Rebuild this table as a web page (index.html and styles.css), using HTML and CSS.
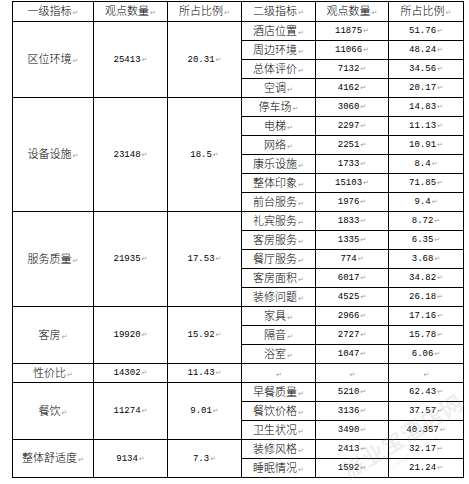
FILE: index.html
```html
<!DOCTYPE html>
<html lang="zh">
<head>
<meta charset="utf-8">
<link rel="stylesheet" href="styles.css">
</head>
<body>
<div class="wrap">
<table class="t">
<colgroup><col class="c1"><col class="c2"><col class="c3"><col class="c4"><col class="c5"><col class="c6"></colgroup>
<tr class="hd"><td>一级指标<span class="pm">↵</span></td><td>观点数量<span class="pm">↵</span></td><td>所占比例<span class="pm">↵</span></td><td>二级指标<span class="pm">↵</span></td><td>观点数量<span class="pm">↵</span></td><td>所占比例<span class="pm">↵</span></td></tr>

<tr><td rowspan="4">区位环境<span class="pm">↵</span></td><td rowspan="4" class="n">25413<span class="pm">↵</span></td><td rowspan="4" class="n">20.31<span class="pm">↵</span></td><td>酒店位置<span class="pm">↵</span></td><td class="n">11875<span class="pm">↵</span></td><td class="n">51.76<span class="pm">↵</span></td></tr>
<tr><td>周边环境<span class="pm">↵</span></td><td class="n">11066<span class="pm">↵</span></td><td class="n">48.24<span class="pm">↵</span></td></tr>
<tr><td>总体评价<span class="pm">↵</span></td><td class="n">7132<span class="pm">↵</span></td><td class="n">34.56<span class="pm">↵</span></td></tr>
<tr><td>空调<span class="pm">↵</span></td><td class="n">4162<span class="pm">↵</span></td><td class="n">20.17<span class="pm">↵</span></td></tr>

<tr><td rowspan="6">设备设施<span class="pm">↵</span></td><td rowspan="6" class="n">23148<span class="pm">↵</span></td><td rowspan="6" class="n">18.5<span class="pm">↵</span></td><td>停车场<span class="pm">↵</span></td><td class="n">3060<span class="pm">↵</span></td><td class="n">14.83<span class="pm">↵</span></td></tr>
<tr><td>电梯<span class="pm">↵</span></td><td class="n">2297<span class="pm">↵</span></td><td class="n">11.13<span class="pm">↵</span></td></tr>
<tr><td>网络<span class="pm">↵</span></td><td class="n">2251<span class="pm">↵</span></td><td class="n">10.91<span class="pm">↵</span></td></tr>
<tr><td>康乐设施<span class="pm">↵</span></td><td class="n">1733<span class="pm">↵</span></td><td class="n">8.4<span class="pm">↵</span></td></tr>
<tr><td>整体印象<span class="pm">↵</span></td><td class="n">15103<span class="pm">↵</span></td><td class="n">71.85<span class="pm">↵</span></td></tr>
<tr><td>前台服务<span class="pm">↵</span></td><td class="n">1976<span class="pm">↵</span></td><td class="n">9.4<span class="pm">↵</span></td></tr>

<tr><td rowspan="5">服务质量<span class="pm">↵</span></td><td rowspan="5" class="n">21935<span class="pm">↵</span></td><td rowspan="5" class="n">17.53<span class="pm">↵</span></td><td>礼宾服务<span class="pm">↵</span></td><td class="n">1833<span class="pm">↵</span></td><td class="n">8.72<span class="pm">↵</span></td></tr>
<tr><td>客房服务<span class="pm">↵</span></td><td class="n">1335<span class="pm">↵</span></td><td class="n">6.35<span class="pm">↵</span></td></tr>
<tr><td>餐厅服务<span class="pm">↵</span></td><td class="n">774<span class="pm">↵</span></td><td class="n">3.68<span class="pm">↵</span></td></tr>
<tr><td>客房面积<span class="pm">↵</span></td><td class="n">6017<span class="pm">↵</span></td><td class="n">34.82<span class="pm">↵</span></td></tr>
<tr><td>装修问题<span class="pm">↵</span></td><td class="n">4525<span class="pm">↵</span></td><td class="n">26.18<span class="pm">↵</span></td></tr>

<tr><td rowspan="3">客房<span class="pm">↵</span></td><td rowspan="3" class="n">19920<span class="pm">↵</span></td><td rowspan="3" class="n">15.92<span class="pm">↵</span></td><td>家具<span class="pm">↵</span></td><td class="n">2966<span class="pm">↵</span></td><td class="n">17.16<span class="pm">↵</span></td></tr>
<tr><td>隔音<span class="pm">↵</span></td><td class="n">2727<span class="pm">↵</span></td><td class="n">15.78<span class="pm">↵</span></td></tr>
<tr><td>浴室<span class="pm">↵</span></td><td class="n">1047<span class="pm">↵</span></td><td class="n">6.06<span class="pm">↵</span></td></tr>

<tr><td>性价比<span class="pm">↵</span></td><td class="n">14302<span class="pm">↵</span></td><td class="n">11.43<span class="pm">↵</span></td><td><span class="pm">↵</span></td><td><span class="pm">↵</span></td><td><span class="pm">↵</span></td></tr>

<tr><td rowspan="3">餐饮<span class="pm">↵</span></td><td rowspan="3" class="n">11274<span class="pm">↵</span></td><td rowspan="3" class="n">9.01<span class="pm">↵</span></td><td>早餐质量<span class="pm">↵</span></td><td class="n">5210<span class="pm">↵</span></td><td class="n">62.43<span class="pm">↵</span></td></tr>
<tr><td>餐饮价格<span class="pm">↵</span></td><td class="n">3136<span class="pm">↵</span></td><td class="n">37.57<span class="pm">↵</span></td></tr>
<tr><td>卫生状况<span class="pm">↵</span></td><td class="n">3490<span class="pm">↵</span></td><td class="n">40.357<span class="pm">↵</span></td></tr>

<tr><td rowspan="2">整体舒适度<span class="pm">↵</span></td><td rowspan="2" class="n">9134<span class="pm">↵</span></td><td rowspan="2" class="n">7.3<span class="pm">↵</span></td><td>装修风格<span class="pm">↵</span></td><td class="n">2413<span class="pm">↵</span></td><td class="n">32.17<span class="pm">↵</span></td></tr>
<tr><td>睡眠情况<span class="pm">↵</span></td><td class="n">1592<span class="pm">↵</span></td><td class="n">21.24<span class="pm">↵</span></td></tr>
</table>
<div class="wm"><span class="wm-big">旅业宝酒店网</span><span class="wm-small">www.sbyy.com</span></div>
</div>
</body>
</html>
```

FILE: styles.css
```css
html, body {
  margin: 0;
  padding: 0;
  background: #fff;
}
body {
  font-family: "Noto Sans CJK SC", "Noto Sans", sans-serif;
  color: #000;
}
.wrap {
  position: relative;
  padding: 1px 0 0 12px;
  width: 469px;
  height: 484px;
  box-sizing: border-box;
  overflow: hidden;
}
.t {
  border-collapse: collapse;
  table-layout: fixed;
  width: 452px;
}
.c1 { width: 81px; }
.c2 { width: 74px; }
.c3 { width: 74px; }
.c4 { width: 74px; }
.c5 { width: 73px; }
.c6 { width: 75px; }
.t td {
  border: 1px solid #000;
  padding: 0;
  height: 18px;
  text-align: center;
  vertical-align: middle;
  font-size: 11px;
  font-weight: 300;
  line-height: 12px;
  white-space: nowrap;
  overflow: hidden;
}
.t tr.hd td {
  height: 19px;
}
.t td.n {
  font-family: "Liberation Mono", monospace;
  font-size: 9px;
  font-weight: 400;
}
.pm {
  font-family: "DejaVu Sans", sans-serif;
  font-size: 7px;
  font-weight: 400;
  color: #9a9a9a;
  margin-left: 1px;
}
.wm {
  position: absolute;
  left: 335px;
  top: 458px;
  transform: rotate(-32deg);
  transform-origin: left top;
  color: rgba(150, 150, 150, 0.16);
  white-space: nowrap;
  pointer-events: none;
}
.wm-big {
  display: block;
  font-size: 22px;
  font-weight: bold;
  letter-spacing: 1px;
}
.wm-small {
  display: block;
  font-family: "Liberation Sans", sans-serif;
  font-size: 9px;
  margin-left: 40px;
}
```
